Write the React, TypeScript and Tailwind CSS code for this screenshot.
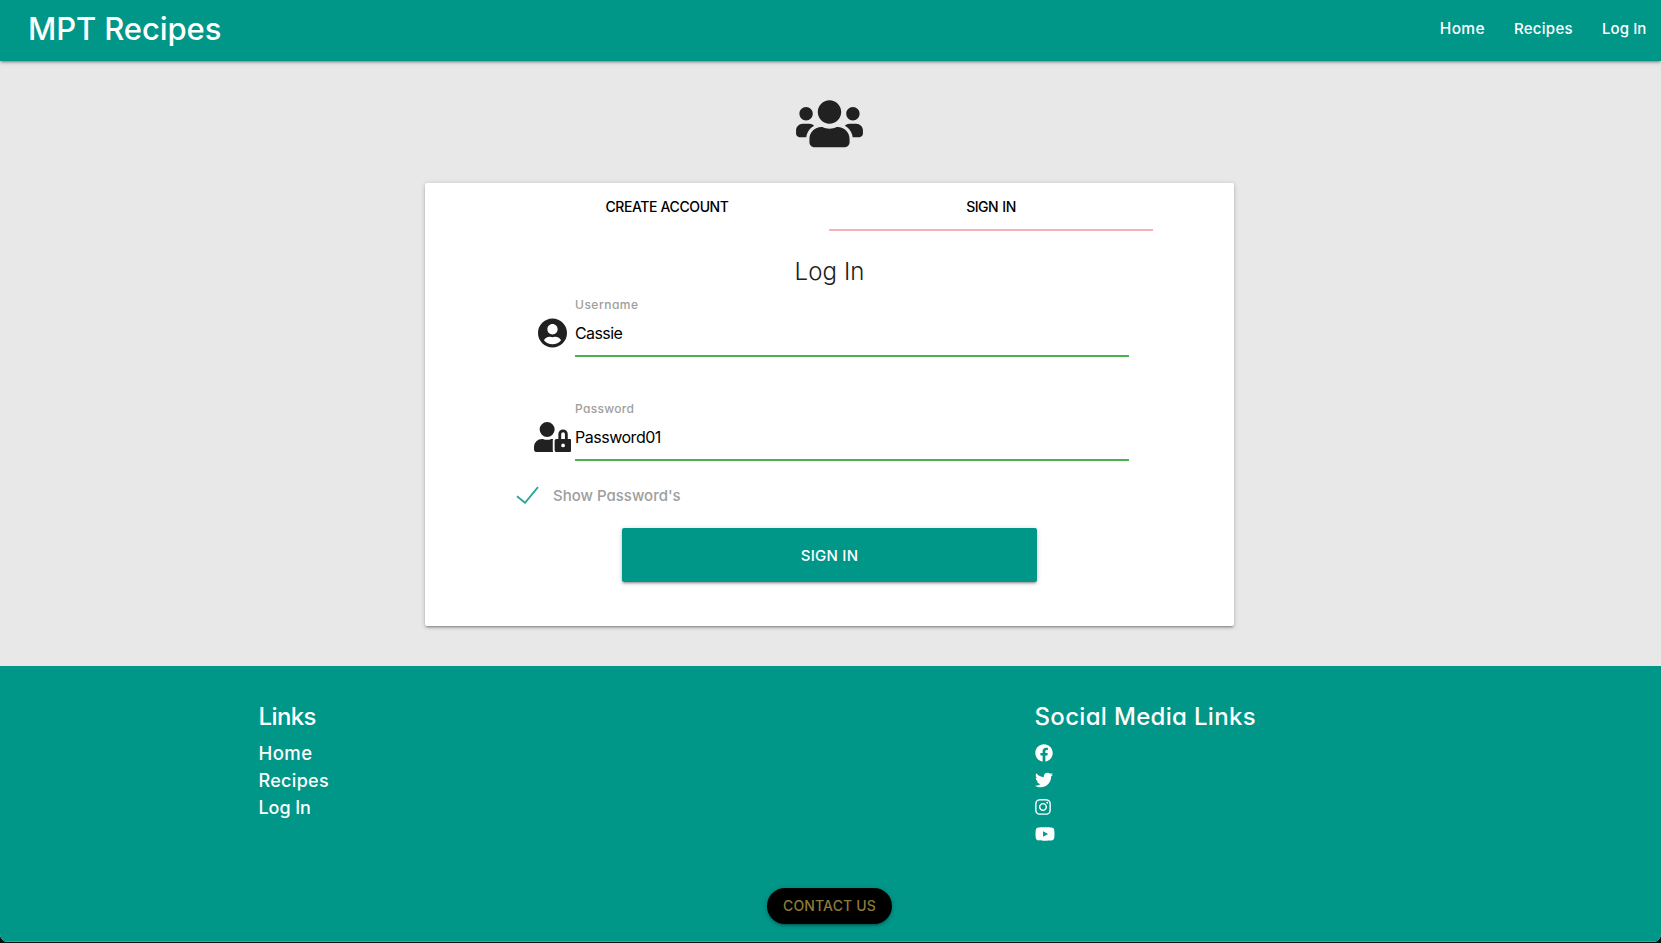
import type { ReactNode } from "react";
import { FaFacebook, FaInstagram, FaTwitter, FaUserCircle, FaUserLock, FaUsers, FaYoutube } from "react-icons/fa";

const materialShadow =
  "shadow-[0_2px_2px_0_rgba(0,0,0,0.14),0_3px_1px_-2px_rgba(0,0,0,0.12),0_1px_5px_0_rgba(0,0,0,0.2)]";

function Navbar() {
  return (
    <header className={`z-10 flex h-[61px] items-center justify-between bg-[#009688] pb-1 text-white ${materialShadow}`}>
      <a href="#" className="ml-7 text-[31px] leading-10 font-[450] tracking-[-0.1px]">MPT Recipes</a>
      <nav className="flex text-[15px] leading-6 font-medium">
        <a href="#" className="pr-[14.5px] pl-[14.5px] text-[15.5px] tracking-[0.35px]">Home</a>
        <a href="#" className="pr-[14.5px] pl-[14.5px] tracking-[0.29px]">Recipes</a>
        <a href="#" className="pr-[14.5px] pl-[14.5px] tracking-[0.11px]">Log In</a>
      </nav>
    </header>
  );
}

function Field({ icon, label, children }: { icon: ReactNode; label: ReactNode; children: ReactNode }) {
  return (
    <div className="ml-[105px] flex h-[60px] w-[599px]">
      <div className="flex w-[45px] justify-center pt-[21px]">{icon}</div>
      <div className="flex-1 border-b-2 border-[#4caf50]">
        <div className="text-xs leading-4 text-[#9e9e9e]">{label}</div>
        <div className="text-base leading-10 text-black [font-feature-settings:normal]">{children}</div>
      </div>
    </div>
  );
}

function LoginCard() {
  return (
    <section className={`mx-auto mt-[33px] h-[443px] w-[809px] rounded-xs bg-white ${materialShadow}`}>
      <div className="ml-20 flex h-12 w-[648px] text-sm text-black">
        <div className="flex flex-1 items-center justify-center font-[450] tracking-[-0.39px]">CREATE ACCOUNT</div>
        <div className="flex flex-1 items-center justify-center border-b-2 border-[#f6b2b5] pt-0.5 font-[450] tracking-[-0.5px] [word-spacing:1px]">SIGN IN</div>
      </div>
      <h1 className="mt-[25px] text-center text-2xl leading-[31px] font-[330] tracking-[0.1px]">Log In</h1>
      <div className="mt-[10px] flex flex-col gap-11">
        <Field icon={<FaUserCircle className="h-[30px] w-[29px]" />} label={<span className="font-[450] tracking-[0.5px]">Username</span>}>
          <span className="tracking-[-0.6px]">Cassie</span>
        </Field>
        <Field icon={<FaUserLock className="h-[30px] w-[37.5px]" />} label={<span className="font-[450] tracking-[0.3px]">Password</span>}>
          <span className="tracking-[-0.48px]">Password01</span>
        </Field>
      </div>
      <div className="mt-[21px] ml-[91px] flex h-[26px] items-center">
        <svg className="h-[18px] w-6" viewBox="0 0 24 18" fill="none" stroke="#26a69a" strokeWidth="1.8">
          <path d="M1 10.2 9 16.8 22 1.2" />
        </svg>
        <span className="ml-[13px] pt-0.5 text-[15px] leading-[26px] font-[450] text-[#9e9e9e]">Show Password's</span>
      </div>
      <button className={`mx-auto mt-5 block h-[54px] w-[415px] rounded-xs bg-[#009688] pt-0.5 text-[15px] font-[450] tracking-[0.25px] text-white [font-feature-settings:normal] ${materialShadow}`}>
        SIGN IN
      </button>
    </section>
  );
}

function Footer() {
  return (
    <footer className="mt-10 h-[276px] border-b border-[#3fa79c] bg-[#009688] pt-[35px] font-medium text-white">
      <div className="flex h-[147px]">
        <div className="ml-[258.5px] w-[776px]">
          <h2 className="mb-[7px] text-2xl leading-8 tracking-[-0.6px]">Links</h2>
          <ul className="text-lg leading-[27px]">
            <li className="text-[18.5px] tracking-[0.45px]">Home</li>
            <li className="tracking-[0.31px]">Recipes</li>
            <li className="tracking-[-0.08px]">Log In</li>
          </ul>
        </div>
        <div>
          <h2 className="mb-1.5 text-2xl leading-8 tracking-[0.32px]">Social Media Links</h2>
          <ul>
            <li className="flex h-[27px] items-center"><FaFacebook className="size-[18px]" /></li>
            <li className="flex h-[27px] items-center"><FaTwitter className="size-[18px]" /></li>
            <li className="flex h-[27px] items-center"><FaInstagram className="h-[18px] w-4" /></li>
            <li className="flex h-[27px] items-center"><FaYoutube className="h-[18px] w-5" /></li>
          </ul>
        </div>
      </div>
      <div className="mt-10 pr-0.5">
        <button className={`mx-auto block h-9 w-[125px] rounded-full bg-black text-sm font-[450] tracking-[0.15px] text-[#8c7b37] ${materialShadow}`}>
          CONTACT US
        </button>
      </div>
    </footer>
  );
}

export default function App() {
  return (
    <div className="h-[943px] overflow-hidden bg-[#06100f] font-['Inter',sans-serif] text-[#212121] [font-feature-settings:'cv11']">
      <div className="flex h-[942px] flex-col overflow-hidden rounded-b-lg bg-[#e8e8e8]">
        <Navbar />
        <main className="pr-0.5">
          <FaUsers className="mx-auto mt-[35.5px] h-[53.5px] w-[67px]" />
          <LoginCard />
        </main>
        <Footer />
      </div>
    </div>
  );
}
